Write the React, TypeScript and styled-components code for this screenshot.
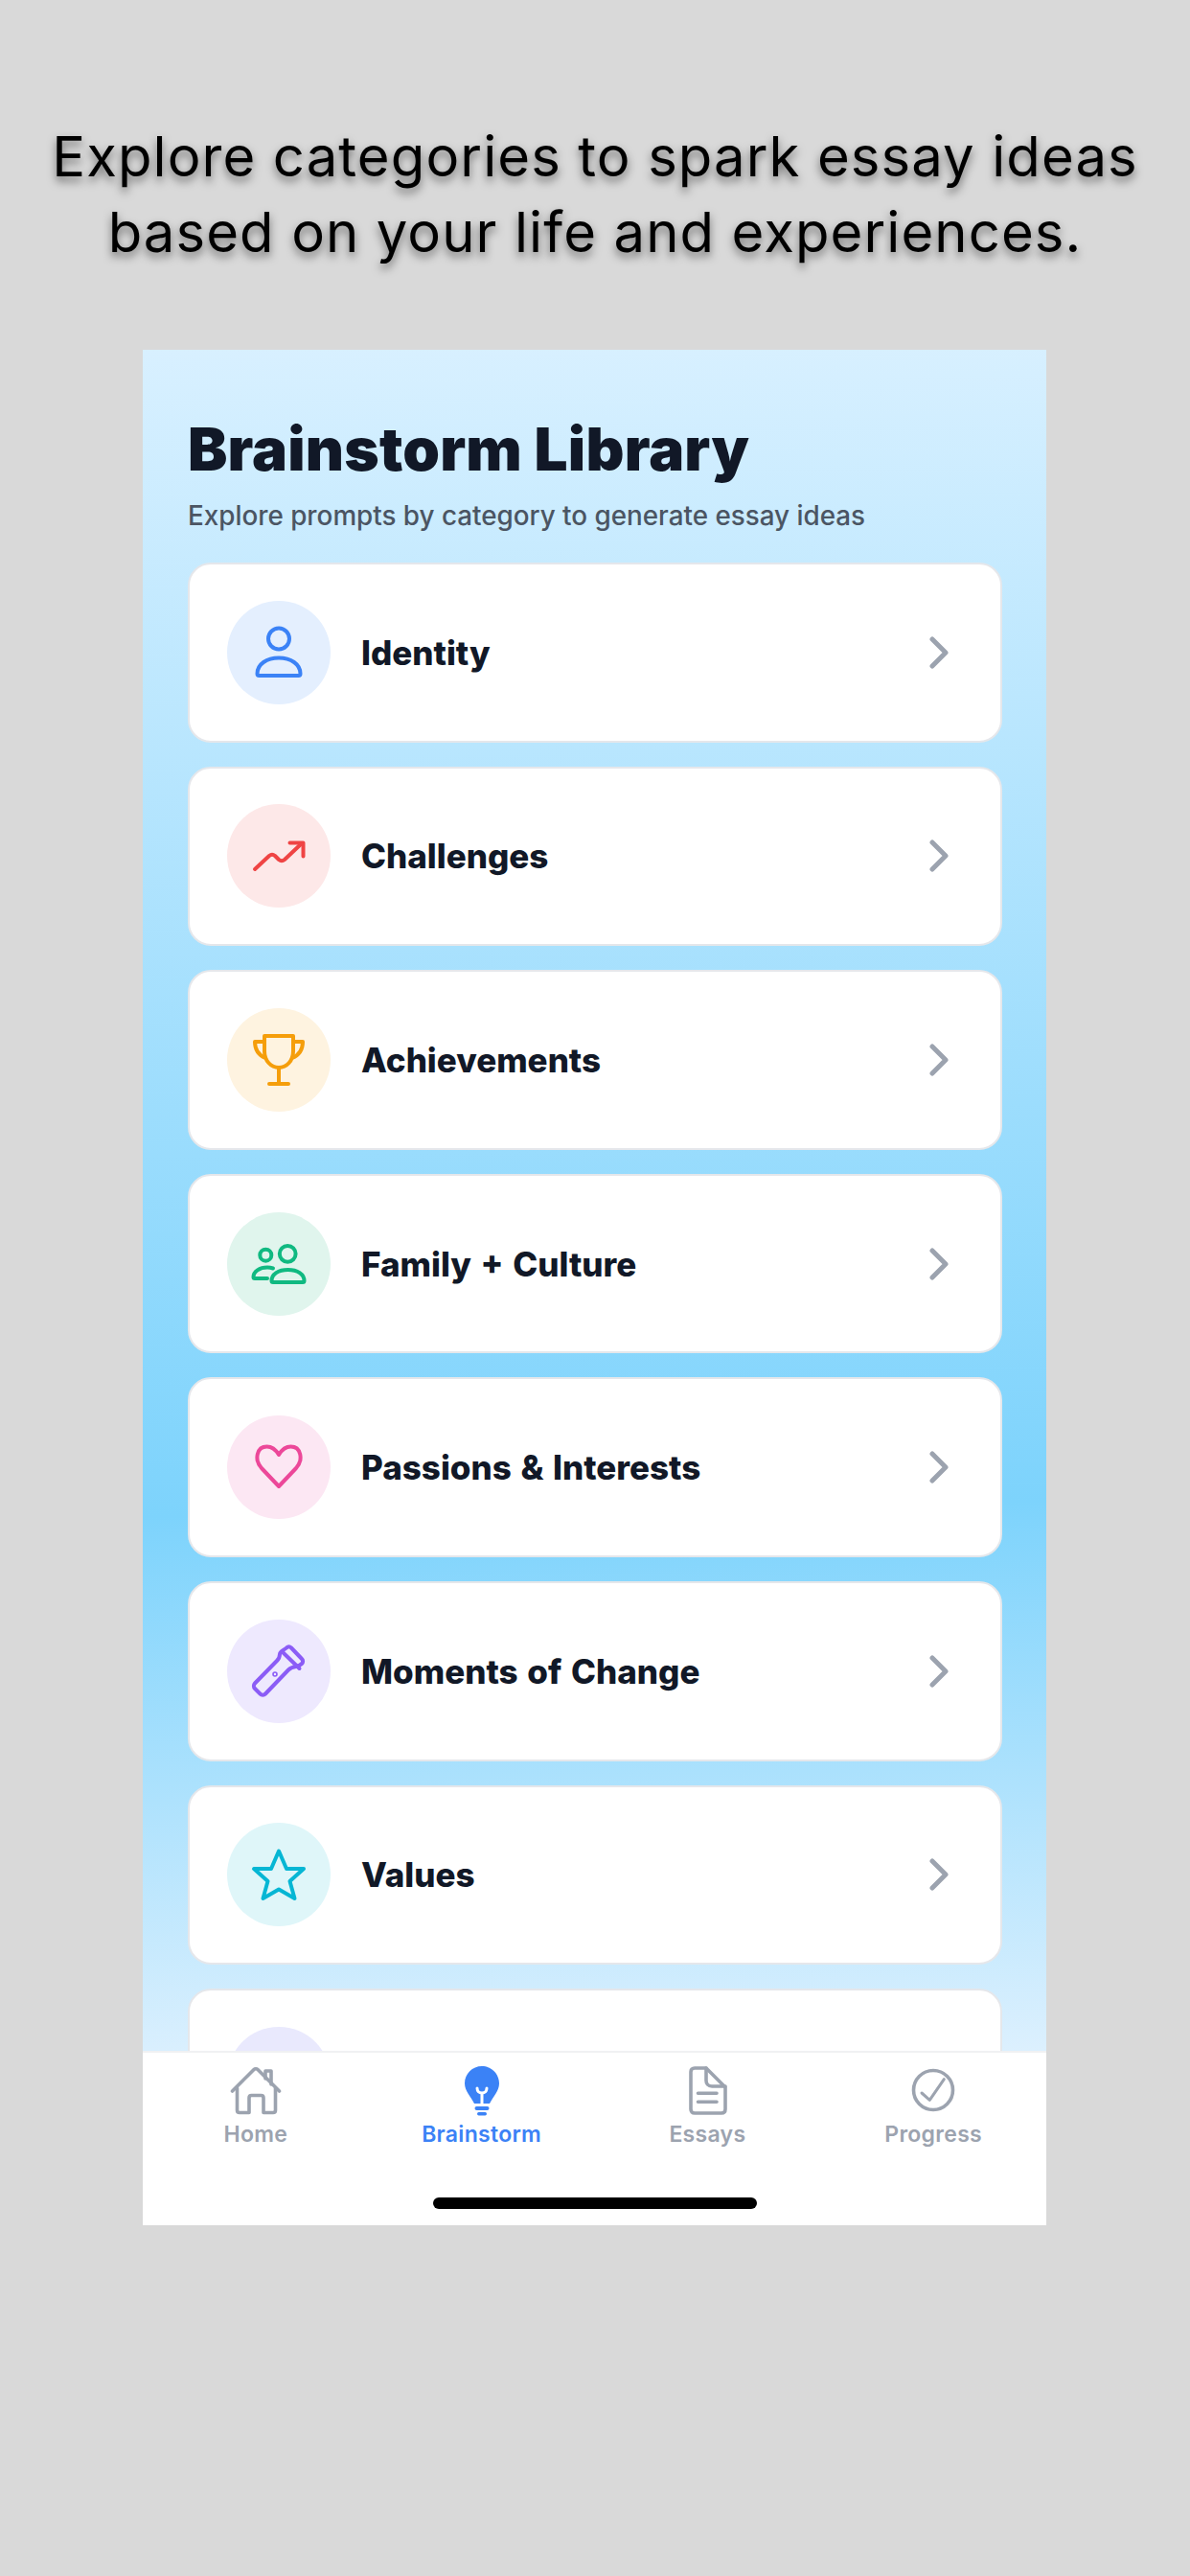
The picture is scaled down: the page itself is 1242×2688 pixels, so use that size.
import React from 'react';
import styled, { createGlobalStyle } from 'styled-components';

const GlobalStyle = createGlobalStyle`
  html, body {
    margin: 0;
    padding: 0;
    background: #d9d9d9;
  }
  #root {
    width: 1242px;
    height: 2688px;
  }
`;

const Page = styled.div`
  width: 1242px;
  height: 2688px;
  box-sizing: border-box;
  padding-top: 124px;
  background: #d9d9d9;
  overflow: hidden;
`;

const Caption = styled.h1`
  margin: 0 0 80px;
  height: 161px;
  font-family: 'Inter', sans-serif;
  font-size: 58px;
  font-weight: 400;
  line-height: 79px;
  letter-spacing: 1.1px;
  text-align: center;
  color: #000;
  text-shadow: 0 5px 10px rgba(0, 0, 0, 0.5);
`;

const Phone = styled.div`
  width: 943px;
  height: 1957px;
  margin-left: 149px;
  display: flex;
  flex-direction: column;
  overflow: hidden;
  background: #fff;
`;

const Content = styled.main`
  flex: 1;
  min-height: 0;
  box-sizing: border-box;
  padding: 68px 46px 0 47px;
  overflow: hidden;
  background: linear-gradient(179deg, #d8f0ff 0%, #7dd3fc 68%, #dcf0fe 100%);
`;

const Title = styled.h2`
  margin: 0;
  font-family: 'Inter', sans-serif;
  font-size: 62px;
  font-weight: 900;
  line-height: 72px;
  letter-spacing: 0.2px;
  color: #111827;
`;

const Subtitle = styled.p`
  margin: 15px 0 31px;
  font-family: 'Inter', sans-serif;
  font-size: 27.8px;
  font-weight: 500;
  line-height: 36px;
  color: #4b5563;
`;

const CardList = styled.div`
  display: flex;
  flex-direction: column;
  gap: 25px;
`;

const Card = styled.div`
  flex: none;
  display: flex;
  align-items: center;
  height: 187.6px;
  box-sizing: border-box;
  padding: 0 54px 0 39px;
  background: #fff;
  border: 2px solid #e5e7eb;
  border-radius: 24px;
`;

const IconCircle = styled.div<{ $bg: string; $fg: string }>`
  flex: none;
  width: 108px;
  height: 108px;
  display: flex;
  align-items: center;
  justify-content: center;
  border-radius: 50%;
  background: ${({ $bg }) => $bg};
  color: ${({ $fg }) => $fg};
`;

const CardLabel = styled.span`
  flex: 1;
  margin-left: 32px;
  font-family: 'Inter', sans-serif;
  font-size: 35px;
  font-weight: 800;
  word-spacing: 2px;
  color: #111827;
`;

const TabBar = styled.nav`
  flex: none;
  height: 182px;
  box-sizing: border-box;
  border-top: 2px solid #f0f1f3;
  background: #fff;
  display: flex;
  flex-direction: column;
`;

const Tabs = styled.div`
  display: grid;
  grid-template-columns: repeat(4, 1fr);
  padding: 12px 0 0 0;
`;

const Tab = styled.div<{ $active?: boolean }>`
  display: flex;
  flex-direction: column;
  align-items: center;
  gap: 3px;
  font-family: 'Inter', sans-serif;
  font-size: 23px;
  font-weight: 600;
  line-height: 28px;
  letter-spacing: 0.3px;
  color: ${({ $active }) => ($active ? '#3b82f6' : '#9ca3af')};
`;

const HomeBar = styled.div`
  width: 338px;
  height: 12px;
  margin: 52px 0 0 303px;
  border-radius: 6px;
  background: #000;
`;

const Svg = ({ children }: { children: React.ReactNode }) => (
  <svg
    width="64"
    height="64"
    viewBox="0 0 64 64"
    fill="none"
    stroke="currentColor"
    strokeWidth="4"
    strokeLinecap="round"
    strokeLinejoin="round"
  >
    {children}
  </svg>
);

const TabSvg = ({ children }: { children: React.ReactNode }) => (
  <svg
    width="56"
    height="56"
    viewBox="0 0 56 56"
    fill="none"
    stroke="currentColor"
    strokeWidth="3.6"
    strokeLinecap="round"
    strokeLinejoin="round"
  >
    {children}
  </svg>
);

const PersonIcon = () => (
  <Svg>
    <circle cx="32" cy="17.500" r="11" />
    <path d="M9.500 54c0-10 10-16.500 22.500-16.500S54.500 44 54.500 54c0 1.200-.8 2-2 2h-41c-1.200 0-2-.8-2-2z" />
  </Svg>
);

const TrendIcon = () => (
  <Svg>
    <path d="M7 46l15-14q3-2.500 6 0l4 4q3 2.500 6 0l18-17" />
    <path d="M43.500 18.500h14v14" />
  </Svg>
);

const TrophyIcon = () => (
  <Svg>
    <path d="M17 7h30v16c0 10-7 17-15 17s-15-7-15-17z" />
    <path d="M17 13H7c0 9 4 14 11 17M47 13h10c0 9-4 14-11 17" />
    <path d="M32 40v17M22 57h20" />
  </Svg>
);

const FamilyIcon = () => (
  <Svg>
    <circle cx="41.200" cy="21.300" r="8.400" />
    <circle cx="18.300" cy="22.700" r="6" />
    <path d="M26 36.500c-2-.6-4-.9-6-.9-8 0-14.500 4-14.500 10 0 1 .6 1.500 1.500 1.500h13" />
    <path d="M24.500 49.500c0-7 7-11.500 17-11.500s17 4.500 17 11.500c0 1-.6 1.500-1.500 1.500H26c-.9 0-1.500-.5-1.500-1.500z" />
  </Svg>
);

const HeartIcon = () => (
  <Svg>
    <path d="M32 52L14 33C6 24 9 10.500 19.500 10.500 25 10.500 29 14 32 19c3-5 7-8.500 12.500-8.500C55 10.500 58 24 50 33z" />
  </Svg>
);

const TorchIcon = () => (
  <Svg>
    <path d="M40 7.500c1.500-1.500 3.500-1.500 5 0L56 19c1.500 1.500 1.500 3.500 0 5s-3.500 2.500-6 3c-3.500.5-6 1.500-8 3.500L18 55.500c-1.500 1.500-4 1.500-5.500 0L7 50c-1.500-1.500-1.500-4 0-5.500L30 21c2-2 3-4 3-7 0-2.500 3-3.500 7-6.500z" />
    <path d="M36.500 12.500l17 16.500" />
    <circle cx="28" cy="35" r="0.800" />
  </Svg>
);

const StarIcon = () => (
  <Svg>
    <path d="M32 7.500L40 26h18L43.500 39l5 18L32 47.500 15.500 57l5-18L6 26h18z" />
  </Svg>
);

const Chevron = () => (
  <svg width="20" height="34" viewBox="0 0 20 34" fill="none" stroke="#9ca3af" strokeWidth="5" strokeLinecap="round" strokeLinejoin="round">
    <path d="M3 3l14 14L3 31" />
  </svg>
);

const HomeTabIcon = () => (
  <TabSvg>
    <path d="M3.500 28L26 5.500c1-1 3-1 4 0L52.500 28" />
    <path d="M38 15V7h6v14" />
    <path d="M8.500 25v23c0 1.500 1 2.500 2.500 2.500h10V35c0-1.500 1-2.500 2.500-2.500h10c1.500 0 2.500 1 2.500 2.500v15.500h10c1.500 0 2.500-1 2.500-2.500V25" />
  </TabSvg>
);

const BulbTabIcon = () => (
  <svg width="56" height="56" viewBox="0 0 56 56" fill="currentColor">
    <path d="M28 2c10 0 18 8 18 18 0 8-6 13-10 21H20C16 33 10 28 10 20 10 10 18 2 28 2z" />
    <rect x="20.500" y="44" width="15" height="4" rx="2" />
    <rect x="23" y="50" width="10" height="3.500" rx="1.700" />
    <path d="M28 42V30M23 25c0 3 2 5 5 5s5-2 5-5" fill="none" stroke="#fff" strokeWidth="3" strokeLinecap="round" />
  </svg>
);

const DocTabIcon = () => (
  <TabSvg>
    <path d="M15 4h12l20 20v23c0 2.500-1.500 4-4 4H15c-2.500 0-4-1.500-4-4V8c0-2.500 1.500-4 4-4z" />
    <path d="M27 4v13c0 3 2 6 6 6h14" />
    <path d="M18.500 30.300H38M18.500 39.300H38" />
  </TabSvg>
);

const CheckTabIcon = () => (
  <TabSvg>
    <circle cx="28" cy="27" r="20.500" />
    <path d="M16 30l8.300 7.300L39.300 15.700" strokeWidth="3" />
  </TabSvg>
);

const categories = [
  { label: 'Identity', bg: '#e4effe', fg: '#3b82f6', icon: <PersonIcon /> },
  { label: 'Challenges', bg: '#fde8e8', fg: '#ef4444', icon: <TrendIcon /> },
  { label: 'Achievements', bg: '#fef3e0', fg: '#f59e0b', icon: <TrophyIcon /> },
  { label: 'Family + Culture', bg: '#e0f5ed', fg: '#10b981', icon: <FamilyIcon /> },
  { label: 'Passions & Interests', bg: '#fce7f3', fg: '#ec4899', icon: <HeartIcon /> },
  { label: 'Moments of Change', bg: '#eee9fe', fg: '#8b5cf6', icon: <TorchIcon /> },
  { label: 'Values', bg: '#dff6f9', fg: '#06b6d4', icon: <StarIcon /> },
  { label: '', bg: '#e9e9fd', fg: '#6366f1', icon: null },
];

const tabs = [
  { label: 'Home', icon: <HomeTabIcon /> },
  { label: 'Brainstorm', icon: <BulbTabIcon />, active: true },
  { label: 'Essays', icon: <DocTabIcon /> },
  { label: 'Progress', icon: <CheckTabIcon /> },
];

const App = () => (
  <Page>
    <GlobalStyle />
    <Caption>
      Explore categories to spark essay ideas
      <br />
      based on your life and experiences.
    </Caption>
    <Phone>
      <Content>
        <Title>Brainstorm Library</Title>
        <Subtitle>Explore prompts by category to generate essay ideas</Subtitle>
        <CardList>
          {categories.map((c) => (
            <Card key={c.label || 'more'}>
              <IconCircle $bg={c.bg} $fg={c.fg}>{c.icon}</IconCircle>
              <CardLabel>{c.label}</CardLabel>
              <Chevron />
            </Card>
          ))}
        </CardList>
      </Content>
      <TabBar>
        <Tabs>
          {tabs.map((t) => (
            <Tab key={t.label} $active={t.active}>
              {t.icon}
              {t.label}
            </Tab>
          ))}
        </Tabs>
        <HomeBar />
      </TabBar>
    </Phone>
  </Page>
);

export default App;
